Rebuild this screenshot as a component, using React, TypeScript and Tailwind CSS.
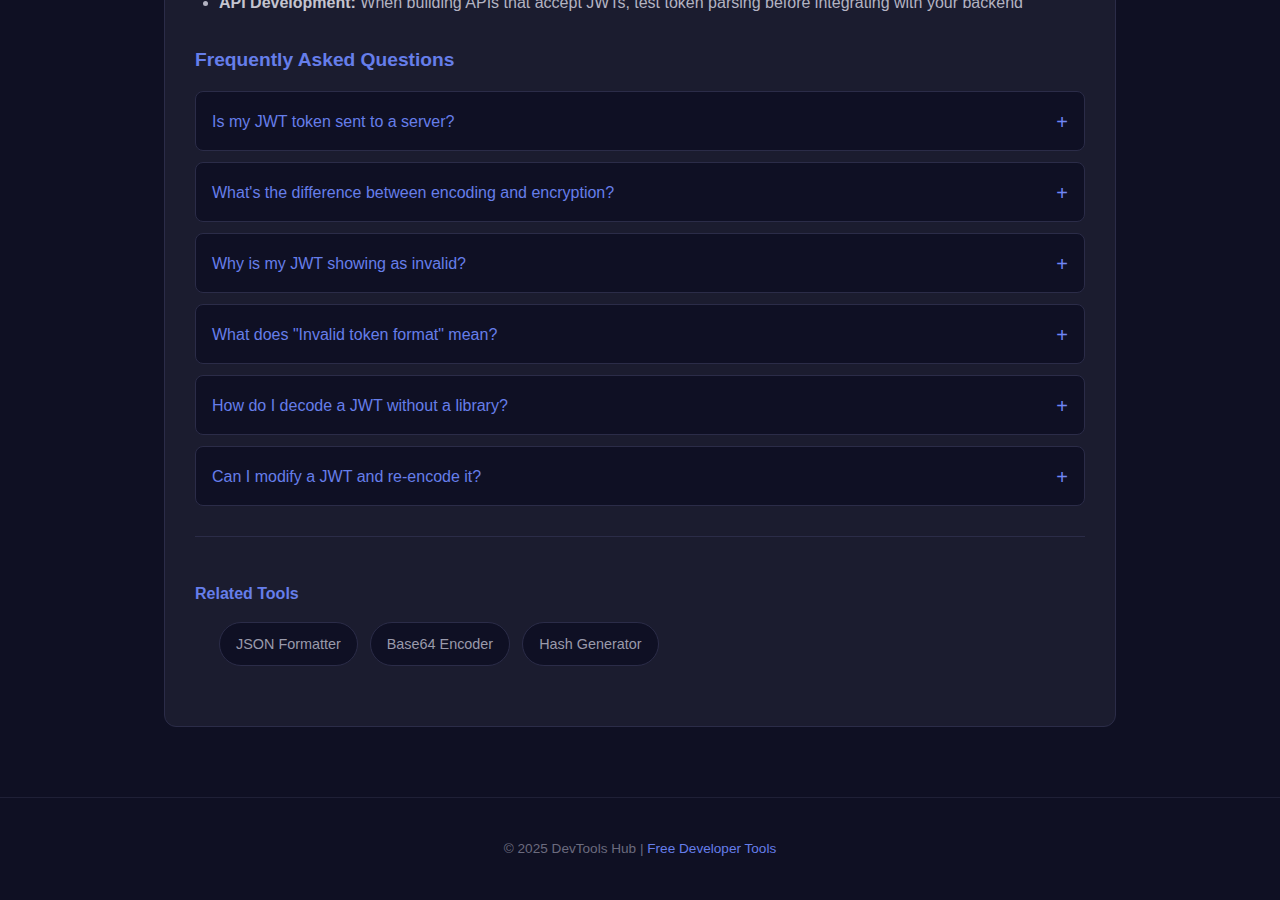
import React from 'react';

const faqs = [
  'Is my JWT token sent to a server?',
  "What's the difference between encoding and encryption?",
  'Why is my JWT showing as invalid?',
  'What does "Invalid token format" mean?',
  'How do I decode a JWT without a library?',
  'Can I modify a JWT and re-encode it?',
];

const relatedTools = ['JSON Formatter', 'Base64 Encoder', 'Hash Generator'];

function App() {
  return (
    <div className="min-h-screen bg-[#0f1023] font-['Liberation_Sans',Arial,sans-serif] overflow-hidden">
      <main className="flex justify-center pb-[70px]">
        <div className="w-[952px] -mt-[31px] bg-[#1b1c2f] border border-[#2b2c48] rounded-b-xl px-[30px] pt-[20px] pb-[60px]">
          <ul className="list-disc pl-6 text-[16px] leading-[26px] text-[#b3b3c2]">
            <li>
              <strong className="text-[#c4c4d0]">API Development:</strong> When building APIs that accept JWTs, test token parsing before integrating with your backend
            </li>
          </ul>

          <h2 className="mt-[30px] mb-[16px] text-[19.2px] font-bold text-[#667eea]">Frequently Asked Questions</h2>

          <div className="flex flex-col gap-[11px]">
            {faqs.map((q) => (
              <div
                key={q}
                className="flex items-center justify-between h-[60px] px-4 pt-[2px] bg-[#0f1024] border border-[#2b2c48] rounded-lg"
              >
                <span className="text-[16px] text-[#667eea]">{q}</span>
                <span className="text-[20px] leading-none text-[#6f86f5]">+</span>
              </div>
            ))}
          </div>

          <hr className="mt-[30px] border-0 border-t border-[#2b2c48]" />

          <h3 className="mt-[45px] text-[16px] font-bold text-[#667eea]">Related Tools</h3>
          <ul className="flex gap-3 pl-6 mt-[16px]">
            {relatedTools.map((t) => (
              <li key={t}>
                <a className="flex items-center h-[44px] px-4 pt-[2px] rounded-full bg-[#0f1024] border border-[#2b2c48] text-[14.4px] text-[#9a9aab]">
                  {t}
                </a>
              </li>
            ))}
          </ul>
        </div>
      </main>

      <footer className="border-t border-[#1f2036] pt-[41px] pb-[44px] text-center text-[13.6px] text-[#6b6b7e]">
        © 2025 DevTools Hub | <a className="text-[#667eea]">Free Developer Tools</a>
      </footer>
    </div>
  );
}

export default App;
